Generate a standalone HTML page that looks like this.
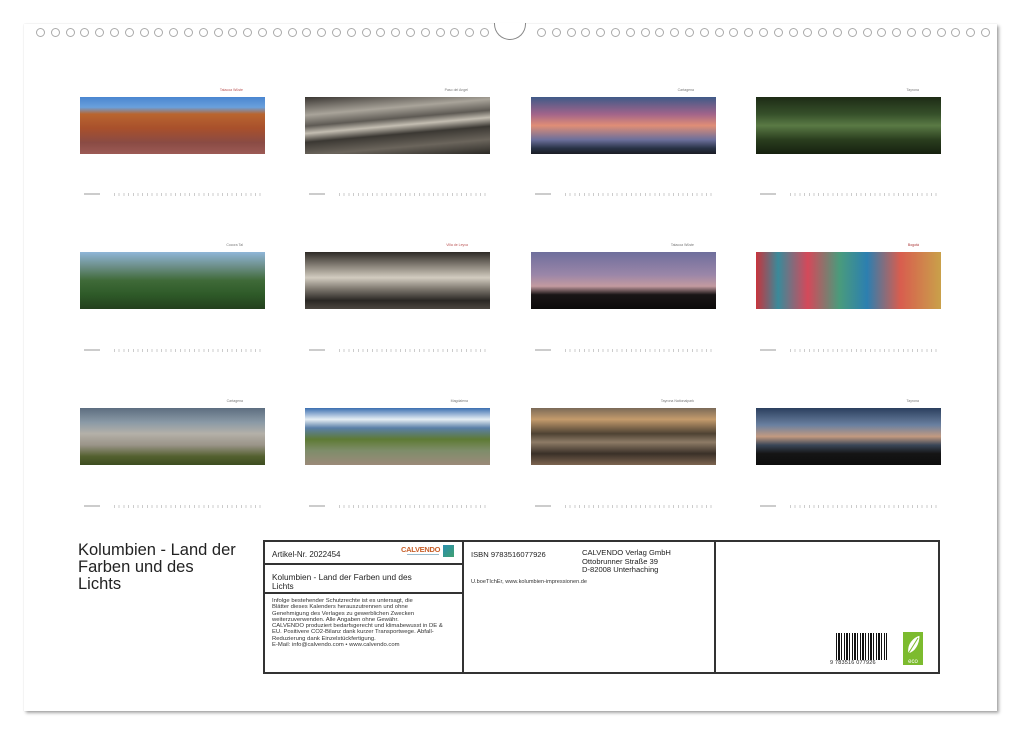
<!DOCTYPE html>
<html><head><meta charset="utf-8"><style>
*{margin:0;padding:0;box-sizing:border-box}
body{width:1020px;height:735px;background:#fff;position:relative;overflow:hidden;font-family:"Liberation Sans",sans-serif;color:#222}
.page{position:absolute;left:24px;top:24px;width:973px;height:687px;background:#fff;box-shadow:2px 2px 3px rgba(0,0,0,.35),0 0 1px rgba(0,0,0,.15)}
.rings{position:absolute;top:28px;display:flex;gap:5.8px}
.rings span{width:9px;height:9px;border:1px solid #aaa;border-radius:50%;display:block}
.notch{position:absolute;left:494px;top:23px;width:32px;height:17px;border:1px solid #888;border-top:none;border-radius:0 0 16px 16px;background:#fff}
.img{position:absolute;width:185px;height:57px}
.lbl{position:absolute;font-size:3.5px;color:#777;width:185px;text-align:right;padding-right:22px}
.days{position:absolute;width:185px;height:4px}
.days i{position:absolute;left:0;top:0;width:16px;height:2px;background:#ccc}
.days b{position:absolute;left:30px;right:6px;top:0;height:3px;background:repeating-linear-gradient(90deg,#ccc 0 1px,transparent 1px 4.7px)}
.box{position:absolute;border:2px solid #333}
</style></head><body>
<div class="page"></div>
<div class="rings" style="left:36px"><span></span><span></span><span></span><span></span><span></span><span></span><span></span><span></span><span></span><span></span><span></span><span></span><span></span><span></span><span></span><span></span><span></span><span></span><span></span><span></span><span></span><span></span><span></span><span></span><span></span><span></span><span></span><span></span><span></span><span></span><span></span></div>
<div class="notch"></div>
<div class="rings" style="left:537px"><span></span><span></span><span></span><span></span><span></span><span></span><span></span><span></span><span></span><span></span><span></span><span></span><span></span><span></span><span></span><span></span><span></span><span></span><span></span><span></span><span></span><span></span><span></span><span></span><span></span><span></span><span></span><span></span><span></span><span></span><span></span></div>

<div class="lbl" style="left:80px;top:88px;color:#b55">Tatacoa Wüste</div>
<div class="img" style="left:80px;top:97px;background:linear-gradient(180deg,#4a86d0 0%,#6aa0dc 18%,#b9652f 30%,#a8502c 55%,#8a4b44 80%,#9c5a55 100%)"></div>
<div class="lbl" style="left:305px;top:88px">Paso del Angel</div>
<div class="img" style="left:305px;top:97px;background:linear-gradient(175deg,#3a3632 0%,#a9a49a 25%,#5e5a54 40%,#c4beb2 50%,#3b3833 62%,#6b655c 80%,#2b2925 100%)"></div>
<div class="lbl" style="left:531px;top:88px">Cartagena</div>
<div class="img" style="left:531px;top:97px;background:linear-gradient(180deg,#3f5a88 0%,#a1648a 30%,#e08e76 50%,#6c6f9c 75%,#283246 90%,#1a1c24 100%)"></div>
<div class="lbl" style="left:756px;top:88px">Tayrona</div>
<div class="img" style="left:756px;top:97px;background:linear-gradient(180deg,#1d2b15 0%,#36502a 30%,#5a7a45 50%,#2a3e1e 75%,#16200f 100%)"></div>
<div class="days" style="left:84px;top:193px"><i></i><b></b></div>
<div class="days" style="left:309px;top:193px"><i></i><b></b></div>
<div class="days" style="left:535px;top:193px"><i></i><b></b></div>
<div class="days" style="left:760px;top:193px"><i></i><b></b></div>

<div class="lbl" style="left:80px;top:243px">Cocora Tal</div>
<div class="img" style="left:80px;top:252px;background:linear-gradient(180deg,#8fb6d8 0%,#6d8f8a 25%,#3f6a38 50%,#2e5a28 75%,#243f1e 100%)"></div>
<div class="lbl" style="left:305px;top:243px;color:#b55">Villa de Leyva</div>
<div class="img" style="left:305px;top:252px;background:linear-gradient(180deg,#2e2a26 0%,#8a847a 25%,#d2ccc0 45%,#7d776e 65%,#2a2724 85%,#4b4640 100%)"></div>
<div class="lbl" style="left:531px;top:243px">Tatacoa Wüste</div>
<div class="img" style="left:531px;top:252px;background:linear-gradient(180deg,#6e6e9c 0%,#9b86a8 40%,#c39aa0 60%,#191516 75%,#0c0a0a 100%)"></div>
<div class="lbl" style="left:756px;top:243px;color:#a33">Bogotá</div>
<div class="img" style="left:756px;top:252px;background:linear-gradient(90deg,#c7343d 0%,#3a8a9a 12%,#d4495a 28%,#4a9b7c 45%,#2c7fb0 60%,#d85d4e 78%,#c9a14a 100%)"></div>
<div class="days" style="left:84px;top:349px"><i></i><b></b></div>
<div class="days" style="left:309px;top:349px"><i></i><b></b></div>
<div class="days" style="left:535px;top:349px"><i></i><b></b></div>
<div class="days" style="left:760px;top:349px"><i></i><b></b></div>

<div class="lbl" style="left:80px;top:399px">Cartagena</div>
<div class="img" style="left:80px;top:408px;background:linear-gradient(180deg,#5d6e80 0%,#8a99a6 25%,#b4b0a8 45%,#9a9488 65%,#53602f 85%,#3d4d20 100%)"></div>
<div class="lbl" style="left:305px;top:399px">Magdalena</div>
<div class="img" style="left:305px;top:408px;background:linear-gradient(180deg,#3c6fb0 0%,#e6eef4 20%,#5a7fa8 35%,#5e7a34 55%,#7f8d6a 75%,#9b8a78 100%)"></div>
<div class="lbl" style="left:531px;top:399px">Tayrona Nationalpark</div>
<div class="img" style="left:531px;top:408px;background:linear-gradient(180deg,#7b6a58 0%,#c49b6c 20%,#4e4233 45%,#8d7b66 60%,#3a3028 80%,#7c6450 100%)"></div>
<div class="lbl" style="left:756px;top:399px">Tayrona</div>
<div class="img" style="left:756px;top:408px;background:linear-gradient(180deg,#2b3f5e 0%,#6a80a0 30%,#c39a80 50%,#3a4658 65%,#151515 80%,#0e0e0e 100%)"></div>
<div class="days" style="left:84px;top:505px"><i></i><b></b></div>
<div class="days" style="left:309px;top:505px"><i></i><b></b></div>
<div class="days" style="left:535px;top:505px"><i></i><b></b></div>
<div class="days" style="left:760px;top:505px"><i></i><b></b></div>

<div style="position:absolute;left:78px;top:542px;font-size:16.5px;line-height:17px;color:#222">Kolumbien - Land der<br>Farben und des<br>Lichts</div>

<div class="box" style="left:263px;top:540px;width:677px;height:134px"></div>
<div style="position:absolute;left:462px;top:540px;width:2px;height:134px;background:#333"></div>
<div style="position:absolute;left:714px;top:540px;width:2px;height:134px;background:#333"></div>
<div style="position:absolute;left:263px;top:563px;width:200px;height:2px;background:#333"></div>
<div style="position:absolute;left:263px;top:592px;width:200px;height:2px;background:#333"></div>

<div style="position:absolute;left:272px;top:550px;font-size:8px">Artikel-Nr. 2022454</div>
<div style="position:absolute;left:401px;top:545px;font-size:7.5px;font-weight:bold;color:#c8602a;letter-spacing:-.3px">CALVENDO</div>
<div style="position:absolute;left:407px;top:554px;width:32px;height:1px;background:#9bc"></div>
<div style="position:absolute;left:443px;top:545px;width:11px;height:12px;background:linear-gradient(135deg,#2a8fb0,#3fa070)"></div>
<div style="position:absolute;left:272px;top:573px;font-size:8.3px;line-height:9px">Kolumbien - Land der Farben und des<br>Lichts</div>
<div style="position:absolute;left:272px;top:598px;font-size:5.9px;line-height:6.3px;color:#333;width:188px">Infolge bestehender Schutzrechte ist es untersagt, die<br>Blätter dieses Kalenders herauszutrennen und ohne<br>Genehmigung des Verlages zu gewerblichen Zwecken<br>weiterzuverwenden. Alle Angaben ohne Gewähr.<br>CALVENDO produziert bedarfsgerecht und klimabewusst in DE &amp;<br>EU. Positivere CO2-Bilanz dank kurzer Transportwege. Abfall-<br>Reduzierung dank Einzelstückfertigung.<br>E-Mail: info@calvendo.com • www.calvendo.com</div>

<div style="position:absolute;left:471px;top:550px;font-size:7.6px">ISBN 9783516077926</div>
<div style="position:absolute;left:582px;top:549px;font-size:7.6px;line-height:8.5px">CALVENDO Verlag GmbH<br>Ottobrunner Straße 39<br>D-82008 Unterhaching</div>
<div style="position:absolute;left:471px;top:579px;font-size:5.6px;color:#333">U.boeTIchEr, www.kolumbien-impressionen.de</div>

<div style="position:absolute;left:836px;top:633px;width:51px;height:27px;background:repeating-linear-gradient(90deg,#111 0 1px,#fff 1px 2px,#111 2px 4px,#fff 4px 5px,#111 5px 6px,#fff 6px 8px)"></div>
<div style="position:absolute;left:830px;top:660px;font-size:5.5px;letter-spacing:.2px">9 783516 077926</div>
<div style="position:absolute;left:903px;top:632px;width:20px;height:33px;background:#7cbb2e"><svg width="20" height="33" viewBox="0 0 20 33"><path d="M5 22 C3 12 10 5 17 3 C17 12 13 20 5 22 Z M5 22 L15 6" fill="#fff" stroke="#7cbb2e" stroke-width="1"/><text x="10" y="31" font-size="6" fill="#fff" text-anchor="middle" font-family="Liberation Sans">eco</text></svg></div>
</body></html>
